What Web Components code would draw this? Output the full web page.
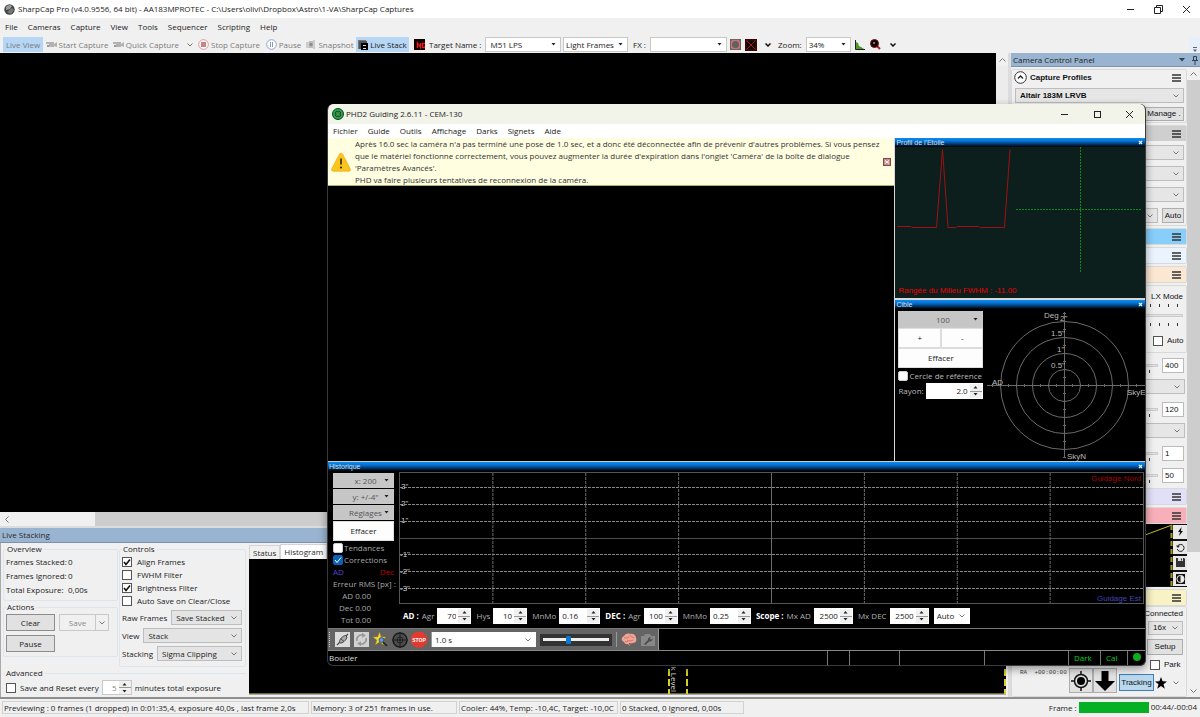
<!DOCTYPE html>
<html lang="fr">
<head>
<meta charset="utf-8">
<title>SharpCap Pro</title>
<style>
html,body{margin:0;height:100%}
body{font:8px/12px "Open Sans","Noto Sans",sans-serif;color:#2a2a2a;background:#f0f0f0;overflow:hidden}
</style>
</head>
<body>
<sharpcap-app></sharpcap-app>
<script>
const BASE = `
:host{display:block;box-sizing:border-box}
:host([hidden]){display:none}
*{box-sizing:border-box;margin:0}
button,input,select{font:inherit;color:inherit;border-radius:0;padding:0;min-width:0;outline:0}
button{display:flex;align-items:center;justify-content:center;white-space:nowrap}
svg{display:block;flex:none}
`;
function define(tag, css, html) {
  customElements.define(tag, class extends HTMLElement {
    constructor() { super(); this.attachShadow({ mode: 'open' }); }
    connectedCallback() {
      this.shadowRoot.innerHTML = `<style>${BASE}${css}</style>` + (typeof html === 'function' ? html(this) : html);
    }
  });
}
const at = (el, n, d = '') => el.getAttribute(n) ?? d;

const ICONS = {
  globe: [11, 11, `<circle cx="5.500" cy="5.500" r="5.200" fill="#444"/><path d="M2 3a4.500 4.500 0 0 1 6-1L6 5 2 6z" fill="#9a9a98"/><path d="M3 8l5-4 2 2-3 4z" fill="#6f7f78"/>`],
  min: [9, 9, `<path d="M1 4.500h7" stroke="#222"/>`],
  max: [9, 9, `<rect x="1.500" y="1.500" width="6" height="6" fill="none" stroke="#222"/>`],
  restore: [9, 9, `<path d="M.5 2.500h6v6h-6zM2.500 2.500v-2h6v6h-2" fill="none" stroke="#222"/>`],
  close: [9, 9, `<path d="M1 1l7 7M8 1l-7 7" stroke="#222" stroke-width="1"/>`],
  cam: [11, 8, `<path d="M0 1h3v2H0zM3 1h5v5H3zM8 3l3-2v5L8 5z" fill="#b2b2b2"/><path d="M1 4h2v2H1z" fill="#999"/>`],
  stop: [11, 11, `<circle cx="5.500" cy="5.500" r="4.800" fill="#fff" stroke="#d49a9c"/><rect x="3" y="3" width="5" height="5" fill="#d07f82"/>`],
  pause: [11, 11, `<circle cx="5.500" cy="5.500" r="4.800" fill="#fff" stroke="#8ea6cf"/><path d="M4.500 3v5M6.500 3v5" stroke="#7f9acb"/>`],
  snap: [10, 9, `<path d="M0 2h3v6H0z" fill="#ccc"/><path d="M3 1h4v7H3z" fill="#bdbdbd"/><circle cx="5" cy="4.500" r="1.700" fill="#8c8c8c"/><path d="M8 0v9" stroke="#aaa"/>`],
  stack: [10, 10, `<path d="M0 0h8v4H3v5H0z" fill="#777"/><path d="M1 1h8v8H1z" fill="#555"/><path d="M3 3h7v7H3z" fill="#000"/><path d="M5 5.500h3M5 8.500h3" stroke="#ddd"/>`],
  ng: [11, 11, `<rect width="11" height="11" fill="#0b0000"/><path d="M3.500 9V4l3 4.500V4M11 4.500H8.500v4H11V6.500" fill="none" stroke="#f01313" stroke-width="1.300"/>`],
  roi: [11, 11, `<rect width="11" height="11" fill="#d07070"/><path d="M0 0h3L0 3zM11 0v3L8 0zM0 11V8l3 3zM11 11H8l3-3z" fill="#555"/><circle cx="5.500" cy="5.500" r="3.500" fill="#606060"/><rect x=".5" y=".5" width="10" height="10" fill="none" stroke="#666"/>`],
  xred: [12, 12, `<rect width="12" height="12" fill="#0a0000"/><path d="M1 1l10 10M11 1L1 11" stroke="#b01313"/><rect x="1" y="1" width="10" height="10" fill="none" stroke="#5e1010"/>`],
  hist: [10, 10, `<path d="M.5 0v9.500H10" fill="none" stroke="#222"/><path d="M1 9V2l2 1 1 3 2 1 3 2z" fill="#4c9a2a"/>`],
  mag: [11, 11, `<path d="M7 7l3 3" stroke="#b71c1c" stroke-width="2"/><circle cx="4.500" cy="4.500" r="4" fill="#120505" stroke="#6d1313"/><circle cx="4" cy="4" r="1" fill="#999"/>`],
  chev: [6, 4, `<path d="M.5.500L3 3 5.500.500" fill="none" stroke="#333"/>`],
  chevB: [6, 4, `<path d="M.5.500L3 3 5.500.500" fill="none" stroke="#111" stroke-width="1.500"/>`],
  chevG: [6, 4, `<path d="M.5.500L3 3 5.500.500" fill="none" stroke="#777"/>`],
  tri: [5, 3, `<path d="M.5 0h4L2.500 2.500z" fill="#222"/>`],
  triUp: [5, 3, `<path d="M.5 2.500h4L2.500 0z" fill="#222"/>`],
  triBig: [7, 4, `<path d="M0 0h6L3 3.500z" fill="#34424f"/>`],
  pin: [6, 9, `<path d="M1.500.500h3v4h-3zM0 4.500h6M3 5v4" fill="none" stroke="#34424f"/>`],
  up: [7, 4, `<path d="M.5 3.500l3-3 3 3" fill="none" stroke="#777"/>`],
  down: [7, 4, `<path d="M.5.500l3 3 3-3" fill="none" stroke="#777"/>`],
  left: [4, 7, `<path d="M3.500.500l-3 3 3 3" fill="none" stroke="#777"/>`],
  burger: [9, 8, `<path d="M0 1h9M0 4h9M0 7h9" stroke="#333" stroke-width="1.400"/>`],
  collapse: [13, 13, `<circle cx="6.500" cy="6.500" r="5.800" fill="#fff" stroke="#333"/><path d="M4 7.500l2.500-2.500L9 7.500" fill="none" stroke="#222" stroke-width="1.300"/>`],
  over: [4, 5, `<path d="M0 .5h4" stroke="#666"/><path d="M0 2.500h4L2 5z" fill="#666"/>`],
  phd: [12, 12, `<circle cx="6" cy="6" r="5.500" fill="#27a04a" stroke="#0c4a20"/><circle cx="6" cy="6" r="3" fill="#0b2e16"/><circle cx="6" cy="6" r="2" fill="none" stroke="#6d5" stroke-width=".7"/><circle cx="6" cy="6" r=".8" fill="#cfc"/>`],
  warn: [20, 20, `<path d="M10 1.200c.7 0 1.200.4 1.600 1l7.600 14.600c.6 1.200 0 2.400-1.300 2.400H2.100C.8 19.200.2 18 .8 16.800L8.400 2.200c.4-.6.900-1 1.600-1z" fill="#fcc51c" stroke="#e8a008" stroke-width=".6"/><path d="M10 6.500v6" stroke="#3a2a10" stroke-width="1.700"/><circle cx="10" cy="15.500" r="1.100" fill="#3a2a10"/>`],
  xbox: [8, 8, `<rect x=".5" y=".5" width="7" height="7" fill="#c98a8a" stroke="#7f4a4a"/><path d="M2 2.500l4 3M6 2.500L2 5.500" stroke="#fff"/>`],
  xs: [5, 5, `<path d="M1 1l3 3M4 1l-3 3" stroke="#dff" stroke-width="1.200"/>`],
  bolt: [7, 9, `<path d="M4.500 0L1 5h2L2 9l4-5H4z" fill="#111"/>`],
  undo: [9, 9, `<path d="M2 2.500A3.500 3.500 0 1 1 1.200 6" fill="none" stroke="#222"/><path d="M0 2.500h4L2 5z" fill="#222"/>`],
  save: [9, 9, `<path d="M0 0h8l1 1v8H0z" fill="#333"/><path d="M2 0h5v3H2z" fill="#ddd"/><path d="M5 .5h1v2H5z" fill="#333"/>`],
  contrast: [9, 10, `<rect width="9" height="10" fill="#111"/><circle cx="4.500" cy="5" r="3.600" fill="#111" stroke="#eee"/><path d="M4.500 1.500a3.500 3.500 0 0 1 0 7z" fill="#eee"/>`],
  aim: [20, 20, `<circle cx="10" cy="10" r="6.500" fill="none" stroke="#111" stroke-width="1.500"/><circle cx="10" cy="10" r="4" fill="#000"/><path d="M10 0v4M10 16v4M0 10h4M16 10h4" stroke="#111" stroke-width="1.500"/>`],
  arrow: [20, 20, `<path d="M6.500 0h7v10H20L10 20 0 10h6.500z" fill="#000"/>`],
  star: [12, 12, `<path d="M6 0l1.600 4.200L12 4.400 8.500 7.200l1.300 4.500L6 9.100l-3.800 2.600 1.300-4.500L0 4.400l4.400-.2z" fill="#000"/>`],
  plug: [15, 15, `<rect width="15" height="15" fill="#dcdcdc"/><path d="M2 13l3-3M11 4l2-2" stroke="#444" stroke-width="1.100"/><path d="M4.500 10.500c-.5-3 3-6.500 6-7l1.500 1.500c-.5 3-4.500 6.500-7 6z" fill="#a8a8a8" stroke="#444"/><path d="M6 7l3 2.500" stroke="#444"/>`],
  loop: [15, 15, `<rect width="15" height="15" fill="#d2d2d2"/><path d="M3 9A4.600 4.600 0 0 1 9 3.300M12 6a4.600 4.600 0 0 1-6 5.700" fill="none" stroke="#9a9a9a" stroke-width="1.700"/><path d="M8 .8l4 2.700-4 2.300zM7 14.200L3 11.500l4-2.300z" fill="#9a9a9a"/>`],
  findstar: [15, 15, `<path d="M6.500 0l1.700 4.700 5 .2-4 3.100 1.500 5-4.200-2.900-4.300 2.900 1.500-5-4-3.100 5-.2z" fill="#f2d43a" stroke="#8f7a17" stroke-width=".5"/><path d="M10 10l4 4" stroke="#222" stroke-width="1.600"/><circle cx="8.500" cy="8" r="2.400" fill="#5b9be6" stroke="#345" stroke-width=".8"/>`],
  cross: [16, 16, `<circle cx="8" cy="8" r="7" fill="#4c4c4c" stroke="#1c1c1c" stroke-width="1.500"/><circle cx="8" cy="8" r="3" fill="none" stroke="#222"/><path d="M8 0v16M0 8h16" stroke="#1c1c1c"/>`],
  brain: [16, 14, `<path d="M3 9C0 8 0 4 3 3c1-2 4-3 6-2 3-1 6 1 6 4 1 2 0 5-3 5l-2 .5L9 13l-2-2C5 11.500 3.500 10.500 3 9z" fill="#efa596"/><path d="M3 5c2-1 3 1 5-1M6 8c2-1 4 1 6-1M9 2c0 2 3 2 4 3M4 8c1 1 2 1 3 0" fill="none" stroke="#b8625a" stroke-width=".7"/><path d="M8 10l2 .500L9 13z" fill="#8d2f2a"/>`],
  wrench: [14, 12, `<path d="M0 2h3l1-2h5l1 2h4v10H0z" fill="#888"/><path d="M3 10l4-4a2.500 2.500 0 0 1 3-3L8.700 4.500l1.200 1.200L11.500 4.300A2.500 2.500 0 0 1 8.300 7.300L4.500 11z" fill="#4c4c4c"/>`],
};
const icon = (n) => { const [w, h, b] = ICONS[n]; return `<svg width="${w}" height="${h}" viewBox="0 0 ${w} ${h}" aria-hidden="true">${b}</svg>`; };

define('ui-icon', `:host{display:grid;place-items:center;flex:none}`, el => icon(at(el, 'name')));

/* Labelled drop-down. The optional label text sits before the select. */
define('combo-box', `
label{display:flex;align-items:center;height:100%;gap:var(--gap,4px);white-space:nowrap}
.f{flex:1;display:grid;grid-template-columns:1fr 14px;align-items:center;height:100%;min-width:0;background:var(--bg,#fff);border:1px solid var(--line,#c8c8c8);color:var(--ink,inherit)}
select{grid-area:1/1/2/3;appearance:none;border:0;background:none;width:100%;height:100%;padding:0 0 0 var(--pad,4px);font-weight:inherit;text-align:var(--align,left)}
svg{grid-area:1/2;justify-self:center;pointer-events:none}
`, el => `<label>${at(el, 'label') ? `<span>${at(el, 'label')}</span>` : ''}<span class="f"><select aria-label="${at(el, 'label', at(el, 'name', 'Option'))}"><option>${at(el, 'value')}</option></select>${icon(at(el, 'arrow', 'chevG'))}</span></label>`);

define('check-box', `
label{display:flex;align-items:center;gap:var(--gap,5px);height:100%;white-space:nowrap}
.b{display:grid;flex:none}
input{grid-area:1/1;appearance:none;width:10px;height:10px;background:#fff;border:1px solid var(--line,#555);border-radius:var(--r,0)}
svg{grid-area:1/1;place-self:center;pointer-events:none;display:none}
input:checked+svg{display:block}
:host([blue]) input:checked{background:#0a63b8;border-color:#0a63b8}
`, el => `<label><span class="b"><input type="checkbox" aria-label="${at(el, 'label', at(el, 'name', 'Option'))}"${el.hasAttribute('checked') ? ' checked' : ''}><svg width="8" height="8" viewBox="0 0 8 8"><path d="M1 4l2 2.500L7 1.500" fill="none" stroke="${el.hasAttribute('blue') ? '#fff' : '#111'}" stroke-width="${el.hasAttribute('blue') ? 1 : 1.6}"/></svg></span>${at(el, 'label') ? `<span>${at(el, 'label')}</span>` : ''}</label>`);

define('spin-box', `
label{display:flex;align-items:center;height:100%;gap:var(--gap,3px);white-space:nowrap}
.f{display:flex;height:100%;width:var(--w,34px);background:#fff;border:1px solid var(--line,#fff);color:var(--ink,#222)}
input{flex:1;width:0;border:0;background:none;text-align:var(--align,right);padding:0 2px}
.s{display:grid;flex:none;width:12px;gap:1px;background:#999}
button{border:0;background:#f0f0f0}
b{color:#fff}
`, el => `<label>${at(el, 'group') ? `<b>${at(el, 'group')}</b>` : ''}${at(el, 'label') ? `<span>${at(el, 'label')}</span>` : ''}<span class="f"><input type="text" aria-label="${at(el, 'label', at(el, 'name', 'Valeur'))}" value="${at(el, 'value')}"><span class="s"><button type="button" aria-label="Plus">${icon('triUp')}</button><button type="button" aria-label="Moins">${icon('tri')}</button></span></span></label>`);

define('push-button', `
button{width:100%;height:100%;background:var(--bg,#e1e1e1);border:1px solid var(--line,#adadad);color:var(--ink,inherit);padding:0 2px;gap:2px}
`, el => `<button type="button"${at(el, 'name') ? ` aria-label="${at(el, 'name')}"` : ''}><slot></slot></button>`);

define('window-buttons', `
:host{display:flex;height:100%}
button{width:var(--w,42px);border:0;background:none}
button:last-child{width:var(--last,42px)}
`, el => ['min', at(el, 'mid', 'max'), 'close'].map(n => `<button type="button" aria-label="${n}">${icon(n)}</button>`).join(''));

define('menu-bar', `
nav{display:flex;align-items:center;height:100%;gap:var(--gap,10px);padding:0 0 0 5px}
a{color:#222;text-decoration:none}
`, el => `<nav>${at(el, 'items').split(',').map(t => `<a href="#">${t}</a>`).join('')}</nav>`);

define('tool-button', `
button{width:100%;height:100%;border:0;background:var(--bg,none);color:inherit;gap:2px}
`, el => `<button type="button" aria-label="${at(el, 'name', el.textContent.trim() || 'Outil')}">${at(el, 'icon') ? icon(at(el, 'icon')) : ''}<slot></slot></button>`);

define('main-toolbar', `
.bar{display:grid;height:100%;align-items:stretch;padding:1px 0 1px 3px;
grid-template-columns:40px 68px 84px 68px 41px 52px 53px 20px 132px 67px 5px 94px 16px 16px 18px 1px 73px 17px 15px 20px 1fr 11px;color:#222}
.off{color:#7b7b7b}
.on{--bg:#b5d6f4}
.over{background:#e6f0fb;display:grid;place-items:end center}
`, `<div class="bar">
<tool-button class="on off">Live View</tool-button>
<tool-button class="off" icon="cam">Start Capture</tool-button>
<tool-button class="off" icon="cam">Quick Capture&nbsp; &nbsp;<ui-icon name="chevG"></ui-icon></tool-button>
<tool-button class="off" icon="stop">Stop Capture</tool-button>
<tool-button class="off" icon="pause">Pause</tool-button>
<tool-button class="off" icon="snap">Snapshot</tool-button>
<tool-button class="on" icon="stack">Live Stack</tool-button>
<tool-button icon="ng" name="Night mode"></tool-button>
<combo-box label="Target Name :" value="M51 LPS" arrow="tri"></combo-box>
<combo-box name="Frame type" value="Light Frames" arrow="tri" style="padding-left:2px;--pad:2px"></combo-box>
<span></span>
<combo-box label="FX :" value="" arrow="tri"></combo-box>
<tool-button icon="roi" name="Selection"></tool-button>
<tool-button icon="xred" name="Reticule"></tool-button>
<tool-button icon="chevB" name="Reticule menu"></tool-button>
<span></span>
<combo-box label="Zoom:" value="34%" arrow="tri" style="--pad:2px"></combo-box>
<tool-button icon="hist" name="Histogram"></tool-button>
<tool-button icon="mag" name="Magnifier"></tool-button>
<tool-button icon="chevB" name="Magnifier menu"></tool-button>
<span></span>
<div class="over"><ui-icon name="over"></ui-icon></div>
</div>`);

define('group-box', `
fieldset{border:1px solid #dce5ec;border-radius:2px;height:100%;padding:0 3px 0 2px;min-width:0}
legend{padding:0 2px 0 1px;line-height:12px}
:host([bare]) fieldset{border-width:1px 0 0}
`, el => `<fieldset><legend>${at(el, 'label')}</legend><slot></slot></fieldset>`);

define('live-stacking', `
:host{display:flex;flex-direction:column}
h2{font:inherit;line-height:14px;height:15px;background:#99b4d1;border-bottom:1px solid #7e92a8;padding:0 2px}
.body{flex:1;display:flex;min-height:0}
.opts{display:grid;flex:none;width:248px;grid-template-columns:115px 1fr;grid-template-rows:58px 56px 10px 1fr;padding:0 2px 0 2px;color:#222;border-left:1px solid #aaa}
dl{display:grid;grid-template-columns:62px 1fr;line-height:14px}
dd{margin:0}
.ctl{grid-row:1/4;grid-column:2;padding-left:1px}
.adv{grid-column:1/3}
.rows{display:grid}
check-box{height:13px}
.rows combo-box{height:15px;margin-top:3px;--bg:#e4e4e4;--line:#bdbdbd}
.act{display:grid;grid-template-columns:49px 50px;gap:4px;grid-auto-rows:17px;padding-top:1px}
.act push-button{--line:#8d8d8d}
.save{display:flex;--ink:#8a8a8a}
.save push-button{--bg:#f0f0f0;--line:#c9c9c9;flex:1}
.save push-button+push-button{flex:0 0 14px;margin-left:-1px}
.line{display:flex;align-items:center;gap:3px;height:16px;padding:1px 0 0 1px}
.line spin-box{height:15px;--w:30px;--ink:#888;--line:#c9c9c9}
.view{flex:1;display:flex;flex-direction:column;min-width:0;padding:1px 2px 2px 1px}
.tabs{display:flex;height:15px;align-items:end}
.tabs button{height:14px;border:1px solid #d4d4d4;border-bottom:0;background:#f0f0f0;padding:0 3px}
.tabs button.sel{background:#fff;height:15px}
.plot{position:relative;flex:1;background:#000;border-bottom:1px solid #aaa}
.plot i{position:absolute;top:0;bottom:0;width:2px;background:repeating-linear-gradient(#d8d020 0 7px,#000 7px 10px)}
.plot em{position:absolute;bottom:0;left:0;right:0;height:1px;background:#6b6720}
.plot span{position:absolute;bottom:2px;left:55.500%;writing-mode:vertical-rl;line-height:10px;color:#ddd}
`, `<h2>Live Stacking</h2>
<div class="body"><div class="opts">
<group-box label="Overview"><dl><dt>Frames Stacked:</dt><dd>0</dd><dt>Frames Ignored:</dt><dd>0</dd><dt>Total Exposure:</dt><dd>0,00s</dd></dl></group-box>
<group-box class="ctl" label="Controls"><div class="rows">
<check-box label="Align Frames" checked></check-box><check-box label="FWHM Filter"></check-box><check-box label="Brightness Filter" checked></check-box><check-box label="Auto Save on Clear/Close"></check-box>
<combo-box label="Raw Frames" value="Save Stacked"></combo-box><combo-box label="View" value="Stack"></combo-box><combo-box label="Stacking" value="Sigma Clipping"></combo-box>
</div></group-box>
<group-box label="Actions"><div class="act"><push-button>Clear</push-button><div class="save"><push-button>Save</push-button><push-button name="Save menu"><ui-icon name="chevG"></ui-icon></push-button></div><push-button>Pause</push-button></div></group-box>
<group-box bare class="adv" label="Advanced"><div class="line"><check-box label="Save and Reset every" style="--gap:4px"></check-box><spin-box name="Minutes" value="5"></spin-box><span>minutes total exposure</span></div></group-box>
</div>
<div class="view"><div class="tabs"><button type="button">Status</button><button type="button" class="sel">Histogram</button></div>
<div class="plot"><em></em><i style="left:55.300%"></i><i style="left:57.700%"></i><i style="right:0"></i><span>Black Level</span></div></div></div>`);

define('scroll-track', `
:host{display:flex;background:#cdcdcd}
:host([vertical]){flex-direction:column}
.end{flex:0 0 13px;display:grid;place-items:center;background:#f0f0f0}
.thumb{flex:none;background:var(--thumb,#f0f0f0);width:var(--tw,auto);height:var(--th,auto)}
.rest{flex:1}
`, el => `<div class="end">${icon(at(el, 'a', 'up'))}</div><div class="thumb"></div><div class="rest"></div>${at(el, 'b') ? `<div class="end">${icon(at(el, 'b'))}</div>` : ''}`);

define('panel-section', `
:host{border:1px solid #d9d9d9;border-radius:2px}
header{display:flex;align-items:center;gap:3px;height:15px;background:var(--head,#f0f0f0);padding:0 5px 0 2px;font:bold 8px/12px "Liberation Sans",Arial,sans-serif;color:#111}
h3{font:inherit;flex:1}
`, el => `<header>${el.hasAttribute('fold') ? icon('collapse') : ''}<h3>${at(el, 'label')}</h3>${icon('burger')}</header><slot></slot>`);

define('slider-row', `
:host{display:flex;align-items:center;gap:4px;height:22px;padding:0 3px}
.t{flex:1;display:grid;align-items:center;height:16px;background:linear-gradient(90deg,#333 1px,transparent 1px) 100% 100%/9px 3px repeat-x}
:host([both]){height:22px}
:host([both]) .t{height:22px;background:linear-gradient(90deg,#333 1px,transparent 1px) 0 0/9px 3px repeat-x,linear-gradient(90deg,#333 1px,transparent 1px) 0 100%/9px 3px repeat-x}
input[type=range]{appearance:none;width:100%;height:3px;background:#e2e2e2;border:1px solid #ccc}
input[type=range]::-webkit-slider-thumb{appearance:none;width:4px;height:10px;background:#0a78d7}
input[type=text]{width:22px;height:15px;border:1px solid #bbb;background:#fff;padding:0 2px}
`, el => `<span class="t"><input type="range" aria-label="${at(el, 'name')}" value="20"></span>${at(el, 'value') ? `<input type="text" aria-label="${at(el, 'name')} valeur" value="${at(el, 'value')}">` : ''}`);

define('control-panel', `
:host{display:flex;flex-direction:column;font-family:"Liberation Sans",Arial,sans-serif;color:#111}
h2{font:8px/14px "Open Sans","Noto Sans",sans-serif;color:#222;display:flex;align-items:center;gap:6px;height:14px;background:#99b4d1;border-bottom:1px solid #7e92a8;padding:1px 2px 0 2px}
h2 span{flex:1}
.wrap{flex:1;display:flex;min-height:0}
.list{flex:1;min-width:0;overflow:hidden;padding-top:2px}
panel-section{margin-bottom:2px}
scroll-track{width:13px;background:#f0f0f0;--th:472px;--thumb:#cdcdcd}
combo-box{height:15px;--bg:#e6e6e6;--line:#bdbdbd}
.pad{display:grid;gap:6px;padding:4px 2px 2px}
.one{display:grid;gap:4px;padding:3px 2px 1px 3px;font-weight:bold}
.one push-button{height:14px;width:40px;justify-self:end;font-weight:normal}
.two{display:grid;grid-template-columns:1fr 22px;gap:4px}
.lx{height:68px;border:1px solid #d9d9d9;border-radius:2px;margin-bottom:1px;padding:4px 3px 0;text-align:right}
.lx p{line-height:14px}
.lx slider-row{padding:0}
.lx check-box{height:14px;width:30px;margin:8px 0 0 auto;--gap:4px}
.rows{padding-bottom:2px}
.rows combo-box{margin:3px 2px 4px}
.mini{display:flex;height:63px;background:#111;margin-top:-2px}
.mini>svg{flex:1;width:0}
.btns{display:grid;width:14px;gap:2px;padding:1px 0}
.btns push-button{--bg:#e8e8e8;--line:#e8e8e8}
.after{margin-top:2px}
.mount{height:91px;border:1px solid #d9d9d9;border-radius:2px;margin-top:-2px;display:grid;grid-template-columns:1fr 24px 24px 66px;grid-template-rows:61px 25px;padding:0 3px}
.top{grid-column:1/5;display:grid;justify-items:end;grid-template-rows:14px 14px 4px 16px 3px 13px;align-items:center}
.top combo-box{width:35px;height:14px}
.top push-button{grid-row:4;width:36px;height:16px}
.top check-box{grid-row:6;width:33px;height:13px;--gap:4px}
pre{font:6px/9px "Liberation Mono",monospace;padding-left:5px;color:#444;overflow:hidden}
.mount>push-button{height:25px}
.trk{display:flex;align-items:center;height:17px;margin:6px 0 0 2px;gap:1px}
.trk push-button{height:17px;width:35px;--bg:#b9d8ee;--line:#3f7fb5}
.trk span{flex:1}
`, `<h2><span>Camera Control Panel</span><ui-icon name="triBig"></ui-icon><ui-icon name="pin"></ui-icon></h2>
<div class="wrap"><div class="list">
<panel-section label="Capture Profiles" fold><div class="one"><combo-box name="Profile" value="Altair 183M LRVB"></combo-box><push-button>Manage .</push-button></div></panel-section>
<panel-section style="--head:#cfcfcf"><div class="pad"><combo-box name="Format"></combo-box><combo-box name="Binning"></combo-box><combo-box name="Area"></combo-box><div class="two"><combo-box name="Output"></combo-box><push-button>Auto</push-button></div></div></panel-section>
<panel-section style="--head:#87cefa"></panel-section>
<panel-section style="--head:#eaf4ff"></panel-section>
<panel-section style="--head:#fbe7d2"></panel-section>
<div class="lx"><p>LX Mode</p><slider-row both name="Exposure"></slider-row><check-box label="Auto"></check-box></div>
<div class="rows"><slider-row name="Gain" value="400"></slider-row><combo-box name="Mode"></combo-box><slider-row name="Offset" value="120"></slider-row><combo-box name="Speed"></combo-box><slider-row name="Red" value="1"></slider-row><slider-row name="Blue" value="50"></slider-row></div>
<panel-section style="--head:#e2e0f8"></panel-section>
<panel-section style="--head:#f8afb9"></panel-section>
<div class="mini"><svg viewBox="0 0 162 63" preserveAspectRatio="xMaxYMid slice"><rect width="162" height="62" fill="#000"/><path d="M110 20L161 1" stroke="#c8c020"/><path d="M160.500 1v61" stroke="#a09a20" stroke-width="2" stroke-dasharray="5 3"/></svg><div class="btns"><push-button name="Auto stretch"><ui-icon name="bolt"></ui-icon></push-button><push-button name="Reset"><ui-icon name="undo"></ui-icon></push-button><push-button name="Save"><ui-icon name="save"></ui-icon></push-button><push-button name="Contrast"><ui-icon name="contrast"></ui-icon></push-button></div></div>
<panel-section class="after" style="--head:#f9f2c4"></panel-section>
<div class="mount"><div class="top"><span>Connected</span><combo-box name="Rate" value="16x"></combo-box><push-button>Setup</push-button><check-box label="Park"></check-box></div>
<pre>
RA  +00:00:00</pre><push-button name="Goto"><ui-icon name="aim"></ui-icon></push-button><push-button name="Down"><ui-icon name="arrow"></ui-icon></push-button><div class="trk"><push-button>Tracking</push-button><ui-icon name="star"></ui-icon><span></span><ui-icon name="chevG"></ui-icon><span></span></div></div>
</div><scroll-track vertical b="down"></scroll-track></div>`);

define('status-bar', `
:host{display:flex;align-items:center;gap:2px;border-top:2px solid #8f8f8f;background:#f0f0f0;padding:1px 3px 2px 2px;color:#222}
span{border:1px solid #d2d2d2;height:13px;line-height:11px;padding:0 1px;white-space:nowrap}
.g{flex:1;border:0}.n{border:0;padding:0}
progress{appearance:none;width:70px;height:11px;border:0}
progress::-webkit-progress-bar{background:#ddd}
progress::-webkit-progress-value{background:#06b025}
label{white-space:nowrap}
`, `<span style="width:307px">Previewing : 0 frames (1 dropped) in 0:01:35,4, exposure 40,0s , last frame 2,0s</span>
<span style="width:146px">Memory: 3 of 251 frames in use.</span>
<span style="width:159px">Cooler: 44%, Temp: -10,4C, Target: -10,0C</span>
<span style="width:124px">0 Stacked, 0 Ignored, 0,00s</span>
<i class="g"></i><label for="fp">Frame :</label><progress id="fp" max="1" value="1"></progress><span class="n">00:44/-00:04</span>`);

/* ---- PHD2 ---- */
define('dock-pane', `
:host{display:flex;flex-direction:column;min-width:0}
header{display:flex;align-items:center;justify-content:space-between;height:9px;padding:0 2px 0 1px;background:linear-gradient(#0a8cf0,#0670d0 35%,#022a55 75%,#000);font:7px/9px "Liberation Sans",Arial,sans-serif;color:#cfe0ee}
h3{font:inherit}
button{border:0;background:none;height:9px}
`, el => `<header><h3>${at(el, 'label')}</h3><button type="button" aria-label="Fermer">${icon('xs')}</button></header><slot></slot>`);

define('star-profile', `
:host{background:#0c1f1d;height:151px;display:grid;grid-template-rows:1fr 14px;font-family:"Liberation Sans",Arial,sans-serif;color:#e80000}
svg{width:100%;height:137px}
p{padding-left:3px;line-height:13px}
`, `<svg viewBox="0 0 250 137" preserveAspectRatio="xMinYMin meet"><path d="M2 79.500h14l1 1h24.500L47.500 2.500l5.500 78h8l1-1h22l1 1h24.500L115 2.500" fill="none" stroke="#a01010"/><path d="M185.500 0v125M121 62.500h125" stroke="#0a8a1a" stroke-dasharray="2 1"/></svg><p>Rangée du Milieu FWHM : -11.00</p>`);

const target = () => {
  let s = '';
  for (const r of [16, 32, 48, 64]) s += `<circle cx="80.500" cy="76.500" r="${r}"/>`;
  for (let k = -72; k <= 72; k += 8) s += `<path d="M${80.5 + k} 75v3M79 ${76.5 + k}h3"/>`;
  return s;
};
define('guide-target', `
:host{display:flex;height:152px;background:#000;color:#b8b8b8;padding:2px 0 0 3px}
.c{width:85px;display:grid;align-content:start;grid-auto-rows:min-content}
.c push-button{height:20px;--bg:#fdfdfd;--line:#ddd;--ink:#222}
.c combo-box{height:17px;--bg:#c6c6c6;--ink:#555;--align:center}
.pm{display:grid;grid-template-columns:1fr 1fr}
check-box{height:14px;--gap:1px;--line:#ccc;--r:2px;margin-top:1px}
spin-box{height:16px;--w:57px;--gap:2px}
svg.t{flex:1;width:0;height:152px;margin:-2px 0 0 1px;font:8px "Liberation Sans",Arial,sans-serif}
`, `<div class="c"><combo-box name="Zoom" value="100" arrow="tri"></combo-box><div class="pm"><push-button>+</push-button><push-button>-</push-button></div><push-button>Effacer</push-button><check-box label="Cercle de référence"></check-box><spin-box label="Rayon:" value="2.0"></spin-box></div>
<svg class="t" viewBox="0 0 161 152" preserveAspectRatio="xMinYMin meet"><g fill="none" stroke="#6a6a6a">${target()}<path d="M3 76.500h158M80.500 3v146"/></g><g fill="#bbb"><text x="60" y="9">Deg</text><text x="76" y="12">2"</text><text x="67" y="27">1.5"</text><text x="73" y="43">1"</text><text x="67" y="59">0.5"</text><text x="8" y="76">AD</text><text x="143" y="86">SkyE</text><text x="83" y="150">SkyN</text></g></svg>`);

const histo = () => {
  let s = '';
  [15, 32, 49, 66, 82, 99, 116].forEach((y, i) => {
    s += `<line x1="0" x2="100%" y1="${y - .5}" y2="${y - .5}" stroke="${i === 3 ? '#4a4a4a' : '#858585'}"${i === 3 ? '' : ' stroke-dasharray="3 1"'}/>`;
  });
  for (let i = 1; i < 8; i++) s += `<line x1="${i * 12.5}%" x2="${i * 12.5}%" y1="0" y2="131" stroke="#6c6c6c"${i === 4 ? '' : ' stroke-dasharray="3 1"'}/>`;
  return s;
};
define('guide-history', `
:host{display:grid;grid-template-columns:61px 1fr;gap:5px;height:157px;background:#000;color:#b0b0b0;padding:1px 1px 0 5px}
.c{display:flex;flex-direction:column;color:#a8a8a8;padding-top:1px}
.c combo-box{height:16px;--bg:#c6c6c6;--ink:#555;--align:center;border-bottom:1px solid #000}
.c push-button{height:20px;--bg:#fdfdfd;--line:#ddd;--ink:#222;margin:0 0 1px}
check-box{height:12px;--gap:1px;--line:#ccc;--r:2px}
.ax{display:flex;justify-content:space-between;height:12px}
.ax span:first-child{color:#4a4ad0}.ax span:last-child{color:#c00000}
.c p{white-space:nowrap;height:12px}
.c p.v{text-align:right;padding-right:23px}
.g{display:flex;flex-direction:column;min-width:0}
svg.h{width:100%;height:132px;border:1px solid #555;font:8px "Liberation Sans",Arial,sans-serif}
.r{display:flex;align-items:center;gap:5px;height:24px;padding-left:4px}
.r spin-box{height:16px}
.w{--w:41px;--align:left}.m{--w:39px}
.r combo-box{width:36px;height:16px;--ink:#222;--pad:2px;--line:#fff}
`, `<div class="c"><combo-box name="x" value="x: 200" arrow="tri"></combo-box><combo-box name="y" value='y: +/-4"' arrow="tri"></combo-box><combo-box name="Réglages" value="Réglages" arrow="tri"></combo-box><push-button>Effacer</push-button>
<check-box label="Tendances"></check-box><check-box label="Corrections" checked blue></check-box><div class="ax"><span>AD</span><span>Dec</span></div><p>Erreur RMS [px] :</p><p class="v">AD 0.00</p><p class="v">Dec 0.00</p><p class="v">Tot 0.00</p></div>
<div class="g"><svg class="h">${histo()}<g fill="#c8c8c8"><text x="1" y="16">3"</text><text x="1" y="33">2"</text><text x="1" y="50">1"</text><text x="0" y="84">-1"</text><text x="0" y="101">-2"</text><text x="0" y="118">-3"</text></g><text x="100%" dx="-2" y="8" text-anchor="end" fill="#a80000">Guidage Nord</text><text x="100%" dx="-2" y="128" text-anchor="end" fill="#4444b8">Guidage Est</text></svg>
<div class="r"><spin-box group="AD :" label="Agr" value="70"></spin-box><spin-box label="Hys" value="10"></spin-box><spin-box class="w" label="MnMo" value="0.16"></spin-box><spin-box group="DEC :" label="Agr" value="100"></spin-box><spin-box class="w" label="MnMo" value="0.25"></spin-box><spin-box class="m" group="Scope :" label="Mx AD" value="2500"></spin-box><spin-box class="m" label="Mx DEC" value="2500"></spin-box><combo-box name="Mode DEC" value="Auto"></combo-box></div></div>`);

define('phd-toolbar', `
:host{height:22px;border-top:1px solid #777;background:#000}
.b{display:inline-flex;align-items:center;height:21px;background:#646464;border-right:1px solid #999;padding:0 3px 0 1px;gap:4px}
.grip{width:2px;height:15px;border-left:1px dotted #ccc}
.sep{width:1px;height:15px;background:#999}
.b button{border:0;background:none;height:16px;width:15px}
.b .s{width:16px;height:16px;background:#e23a2e;color:#fff;font:bold 5px/16px "Liberation Sans",Arial,sans-serif;clip-path:polygon(30% 0,70% 0,100% 30%,100% 70%,70% 100%,30% 100%,0 70%,0 30%)}
combo-box{width:104px;height:15px;margin-left:-4px;--pad:2px;--line:#fff}
.r{background:#333;width:72px;height:12px;display:grid;align-items:center;padding:0 3px}
.r input{appearance:none;width:100%;height:3px;background:#eee}
.r input::-webkit-slider-thumb{appearance:none;width:5px;height:8px;background:#0a78d7;border-radius:1px}
`, `<div class="b"><i class="grip"></i>${['plug', 'loop', 'findstar', 'cross'].map(n => `<button type="button" aria-label="${n}">${icon(n)}</button>`).join('')}<button type="button" class="s">STOP</button><i class="sep"></i><combo-box name="Exposition" value="1.0 s"></combo-box><span class="r"><input type="range" aria-label="Gamma" min="0" max="100" value="38"></span><i class="sep"></i><button type="button" aria-label="Cerveau">${icon('brain')}</button><button type="button" aria-label="Caméra">${icon('wrench')}</button></div>`);

define('phd-window', `
:host{display:flex;flex-direction:column;background:#000;border:1px solid #3a3a3a;border-top:0;border-radius:6px;overflow:hidden;box-shadow:0 3px 8px #0006}
.t{display:flex;align-items:center;gap:2px;height:20px;background:#f2f4ea;padding-left:4px;color:#222}
.t h1{font:inherit;flex:1}
window-buttons{--w:33px;--last:31px}
menu-bar{height:14px;background:#fff}
.m{display:grid;grid-template-columns:1fr 250px;background:#d8d8d8;gap:1px}
.l{display:flex;flex-direction:column;background:#000}
.info{display:flex;align-items:center;gap:4px;height:48px;background:#fffee1;border-bottom:1px solid #aab07a;padding:0 3px 0 3px;color:#333}
.info p{flex:1;align-self:start;line-height:12px;white-space:nowrap}
.r{display:grid;gap:2px}
.h{border-top:1px solid #ccc}
.s{display:grid;grid-template-columns:1fr 22px 50px 85px 84px 32px 27px 18px;height:15px;border-top:1px solid #888;line-height:14px}
.s span{border-left:1px solid #777;color:#00d020;padding-left:5px}
.s span:first-child{border:0;color:#ddd;padding-left:1px}
.s span:last-child{display:grid;place-items:center;padding:0 0 2px}
.dot{width:8px;height:8px;border-radius:50%;background:#0cae1c}
`, `<div class="t"><ui-icon name="phd"></ui-icon><h1>PHD2 Guiding 2.6.11 - CEM-130</h1><window-buttons></window-buttons></div>
<menu-bar items="Fichier,Guide,Outils,Affichage,Darks,Signets,Aide"></menu-bar>
<div class="m"><div class="l"><div class="info"><ui-icon name="warn"></ui-icon><p>Après 16.0 sec la caméra n'a pas terminé une pose de 1.0 sec, et a donc été déconnectée afin de prévenir d'autres problèmes. Si vous pensez<br>que le matériel fonctionne correctement, vous pouvez augmenter la durée d'expiration dans l'onglet 'Caméra' de la boîte de dialogue<br>'Paramètres Avancés'.<br>PHD va faire plusieurs tentatives de reconnexion de la caméra.</p><ui-icon name="xbox"></ui-icon></div></div>
<div class="r"><dock-pane label="Profil de l'Etoile"><star-profile></star-profile></dock-pane><dock-pane label="Cible"><guide-target></guide-target></dock-pane></div></div>
<dock-pane class="h" label="Historique"><guide-history></guide-history></dock-pane>
<phd-toolbar></phd-toolbar>
<div class="s"><span>Boucler</span><span></span><span></span><span></span><span></span><span>Dark</span><span>Cal</span><span><i class="dot"></i></span></div>`);

define('sharpcap-app', `
:host{display:flex;flex-direction:column;min-height:100vh;position:relative}
.t{display:flex;align-items:center;gap:3px;height:18px;background:#fff;padding-left:4px;color:#222}
.t h1{font:inherit;flex:1}
.t window-buttons{--w:28px;--last:28px}
menu-bar{height:18px}
main-toolbar{height:17px}
.main{flex:1;display:grid;grid-template-columns:1fr 189px;gap:3px;background:#dcdcdc;min-height:0}
.left{display:flex;flex-direction:column;min-width:0}
.cam{flex:1;display:flex}
.img{flex:1;background:#000}
.cam scroll-track{width:12px;background:#ececec}
.hs{height:14px;--tw:82px}
live-stacking{height:169px;background:#f0f0f0;margin-top:2px}
control-panel{background:#f0f0f0}
status-bar{height:20px}
phd-window{position:absolute;top:104px;left:327px;right:54px}
`, `<header class="t"><ui-icon name="globe"></ui-icon><h1>SharpCap Pro (v4.0.9556, 64 bit) - AA183MPROTEC - C:\\Users\\olivi\\Dropbox\\Astro\\1-VA\\SharpCap Captures</h1><window-buttons mid="restore"></window-buttons></header>
<menu-bar items="File,Cameras,Capture,View,Tools,Sequencer,Scripting,Help"></menu-bar>
<main-toolbar></main-toolbar>
<div class="main"><div class="left"><div class="cam"><div class="img"></div><scroll-track vertical></scroll-track></div><scroll-track class="hs" a="left"></scroll-track><live-stacking></live-stacking></div><control-panel></control-panel></div>
<status-bar></status-bar>
<phd-window></phd-window>`);
</script>
</body>
</html>
